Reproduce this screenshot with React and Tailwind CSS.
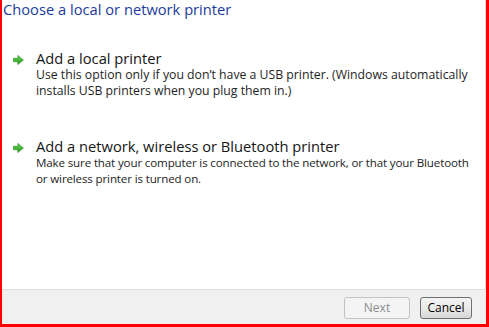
import React from 'react';

const GreenArrow = () => (
  <svg width="11" height="10" viewBox="0 0 11 10" className="shrink-0">
    <defs>
      <linearGradient id="ga" x1="0" y1="0" x2="0" y2="1">
        <stop offset="0" stopColor="#6fd35a" />
        <stop offset="1" stopColor="#1e9a1e" />
      </linearGradient>
    </defs>
    <path d="M0.4 3.3 H4.8 V0.4 L10.4 5 L4.8 9.6 V6.7 H0.4 Z" fill="url(#ga)" stroke="#2a8a25" strokeWidth="0.6" strokeLinejoin="round" />
  </svg>
);

const Option = ({ title, lines, descClass }) => (
  <div className="flex">
    <div className="w-[34px] shrink-0 pl-[11px] pt-[6px]">
      <GreenArrow />
    </div>
    <div className="whitespace-nowrap">
      <div className="text-[14.7px] leading-[18px] text-[#151515]">{title}</div>
      <div className={`leading-[15.5px] text-[#1e1e1e] ${descClass}`}>
        {lines.map((l) => (
          <div key={l}>{l}</div>
        ))}
      </div>
    </div>
  </div>
);

const App = () => {
  return (
    <div
      className="w-[489px] h-[327px] bg-white flex flex-col border-l-2 border-r-[3px] border-b-[3px] border-[#ff0000] overflow-hidden"
      style={{ fontFamily: '"Open Sans", "Noto Sans", sans-serif' }}
    >
      <div className="flex-1 flex flex-col border-r border-[#d8d8d8]">
        <h1 className="text-[14.7px] leading-[18px] text-[#1b3c9a] pl-[1px]">
          Choose a local or network printer
        </h1>
        <div className="mt-[31px]">
          <Option
            title="Add a local printer"
            descClass="text-[12.25px]"
            lines={[
              'Use this option only if you don\u2019t have a USB printer. (Windows automatically',
              'installs USB printers when you plug them in.)',
            ]}
          />
        </div>
        <div className="mt-[39px]">
          <Option
            title="Add a network, wireless or Bluetooth printer"
            descClass="text-[11.6px] tracking-[-0.15px]"
            lines={[
              'Make sure that your computer is connected to the network, or that your Bluetooth',
              'or wireless printer is turned on.',
            ]}
          />
        </div>
      </div>
      <div className="h-[35px] bg-[#f0f0f0] border-t border-[#dfdfdf] flex items-center justify-end gap-[10px] pr-[14px] pt-[1px]">
        <button className="w-[66px] h-[22px] rounded-[3px] border border-[#bfc3c6] bg-[#f4f4f4] text-[12px] text-[#8d8d8d]">
          Next
        </button>
        <button className="w-[52px] h-[22px] rounded-[3px] border border-[#707070] bg-gradient-to-b from-[#f3f3f3] via-[#ebebeb] to-[#d6d6d6] text-[12px] text-black">
          Cancel
        </button>
      </div>
    </div>
  );
};

export default App;
